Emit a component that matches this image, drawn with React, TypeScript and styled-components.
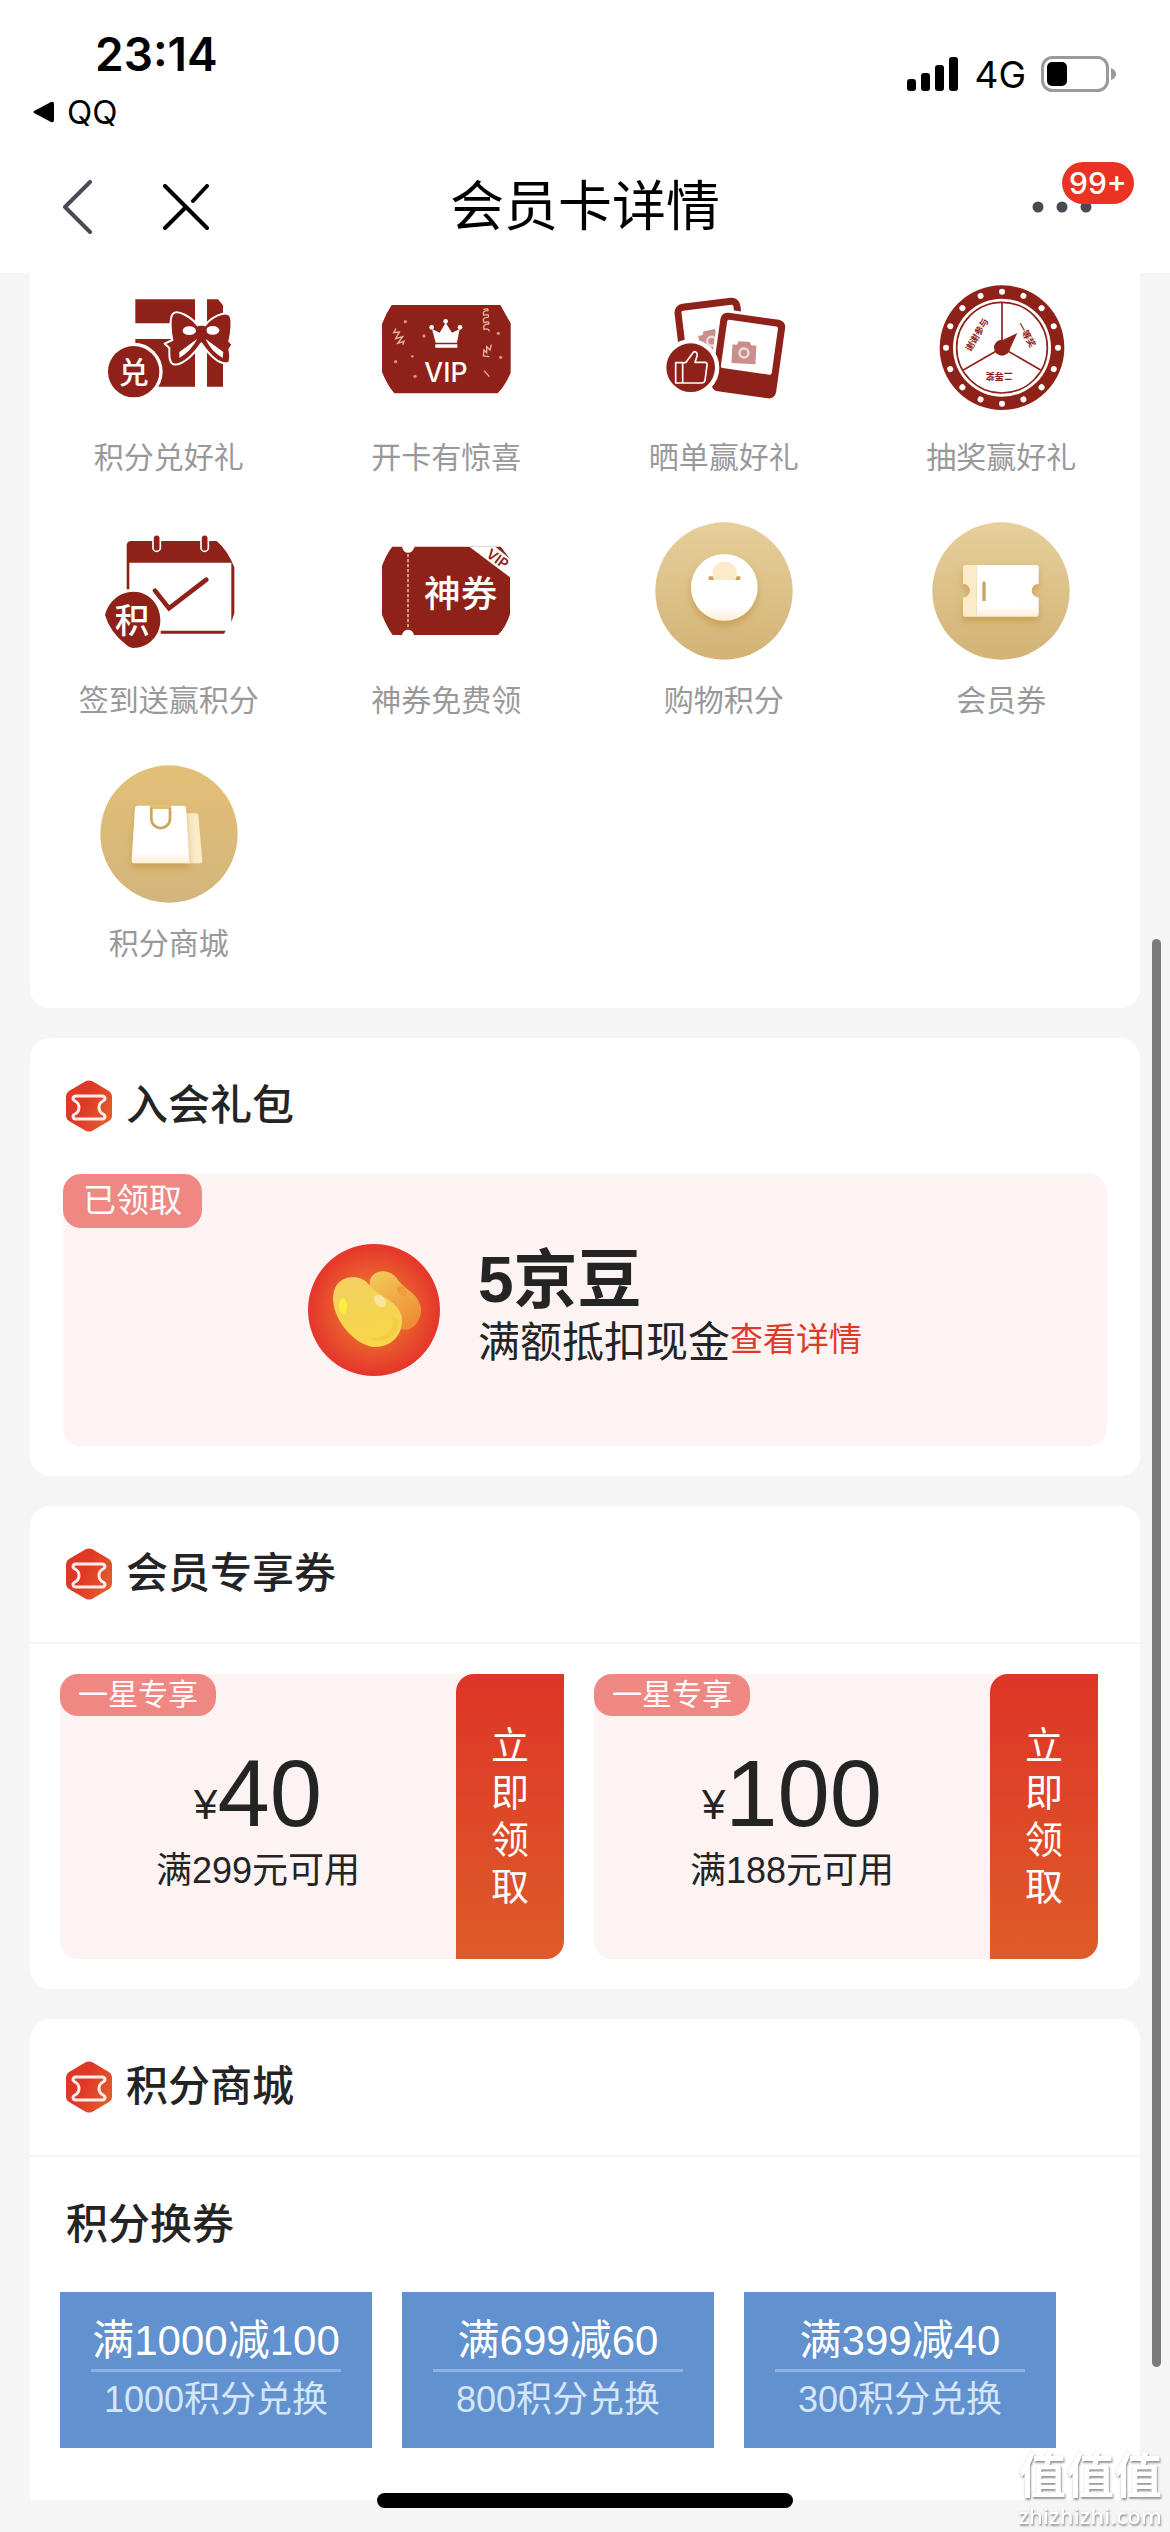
import React from "react";
import styled, { createGlobalStyle } from "styled-components";

const RED = "#8e2118";
const CJK = '"Noto Sans CJK SC", sans-serif';

const GlobalStyle = createGlobalStyle`
  *, *::before, *::after { box-sizing: border-box; }
  body {
    margin: 0;
    background: #f5f5f5;
    color: #242424;
    font-family: "Liberation Sans", ${CJK};
  }
  button {
    margin: 0;
    padding: 0;
    border: 0;
    background: none;
    color: inherit;
    font-family: inherit;
    cursor: pointer;
  }
  a { color: inherit; text-decoration: none; }
  h1, h2, h3, p { margin: 0; }
  svg { display: block; flex: none; }
`;

/* ---------- top of the phone ---------- */

const TopArea = styled.header`
  background: #fff;
  color: #000;
`;

const StatusBar = styled.div`
  display: flex;
  justify-content: space-between;
  height: 140px;
  padding: 24px 54px 0 33px;
  font-family: Inter, ${CJK};
`;

const Clock = styled.div`
  padding-left: 62px;
  font-size: 46px;
  font-weight: 600;
  line-height: 60px;
`;

const BackToApp = styled.a`
  display: flex;
  align-items: center;
  gap: 13px;
  font-size: 33px;
  line-height: 56px;
`;

const Signals = styled.div`
  display: flex;
  align-items: center;
  gap: 15px;
  height: 100px;
  font-size: 37px;
`;

const NavBar = styled.nav`
  display: grid;
  grid-template-columns: 1fr auto 1fr;
  align-items: center;
  height: 133px;
  padding: 0 36px;
`;

const NavActions = styled.div`
  display: flex;
  align-items: center;
  gap: 70px;
  padding-left: 26px;
`;

const PageTitle = styled.h1`
  font-size: 54px;
  font-weight: 400;
  line-height: 80px;
`;

const MenuButton = styled.button`
  position: relative;
  justify-self: end;
  padding: 20px 42px 20px 0;
`;

const Badge = styled.span`
  position: absolute;
  top: -19px;
  right: 0;
  width: 72px;
  border-radius: 21px;
  background: #ea3323;
  color: #fff;
  font: 500 30px/42px Inter, ${CJK};
  text-align: center;
`;

/* ---------- cards ---------- */

const Content = styled.main`
  display: flex;
  flex-direction: column;
  gap: 30px;
  padding: 0 30px 32px;
`;

const Card = styled.section<{ $continues?: boolean }>`
  border-radius: ${(p) => (p.$continues ? "20px 20px 0 0" : "20px")};
  background: #fff;
`;

const ServiceGrid = styled.section`
  display: grid;
  grid-template-columns: repeat(4, 1fr);
  row-gap: 43px;
  padding: 6px 0 43px;
  border-radius: 0 0 20px 20px;
  background: #fff;
`;

const Service = styled.button`
  display: flex;
  flex-direction: column;
  align-items: center;
  gap: 20px;
  color: #999;
  font-size: 30px;
  line-height: 42px;
`;

const CardHeader = styled.div<{ $divided?: boolean }>`
  display: flex;
  align-items: center;
  gap: 14px;
  height: ${(p) => (p.$divided ? 138 : 136)}px;
  padding: 0 36px;
  border-bottom: ${(p) => (p.$divided ? "2px solid #f5f5f5" : "0")};
`;

const CardTitle = styled.h2`
  font-size: 42px;
  font-weight: 500;
  line-height: 60px;
`;

const SubTitle = styled.h3`
  padding: 0 36px;
  font-size: 42px;
  font-weight: 500;
  line-height: 135px;
`;

const Tag = styled.span<{ $small?: boolean }>`
  position: absolute;
  top: 0;
  left: 0;
  padding: 0 ${(p) => (p.$small ? 18 : 20)}px;
  border-radius: 18px;
  background: #ef8883;
  color: #fff;
  font-size: ${(p) => (p.$small ? 30 : 33)}px;
  line-height: ${(p) => (p.$small ? 42 : 54)}px;
`;

const GiftPanel = styled.div`
  position: relative;
  display: flex;
  align-items: center;
  justify-content: center;
  gap: 38px;
  height: 272px;
  border-radius: 18px;
  background: #fdf3f2;
`;

const GiftBody = styled.div`
  padding: 0 33px 30px;
`;

const GiftName = styled.p`
  font-size: 64px;
  font-weight: 700;
  line-height: 66px;
`;

const GiftNote = styled.p`
  display: flex;
  align-items: flex-start;
  font-size: 42px;
  line-height: 60px;
`;

const DetailLink = styled.a`
  color: #dd3a27;
  font-size: 33px;
  line-height: 54px;
`;

const CouponRow = styled.div`
  display: grid;
  grid-template-columns: 1fr 1fr;
  gap: 30px;
  padding: 30px 42px 30px 30px;
`;

const Coupon = styled.article`
  position: relative;
  display: flex;
  height: 285px;
  border-radius: 18px;
  background: #fdf3f2;
`;

const CouponInfo = styled.div`
  display: flex;
  flex: 1;
  flex-direction: column;
  align-items: center;
  justify-content: center;
  padding-top: 15px;
`;

const Amount = styled.p`
  display: flex;
  align-items: flex-end;
  font-size: 94px;
  line-height: 94px;
`;

const Currency = styled.span`
  font-size: 42px;
  line-height: 72px;
`;

const Condition = styled.p`
  font-size: 36px;
  line-height: 60px;
`;

const ClaimButton = styled.button`
  display: flex;
  align-items: center;
  justify-content: center;
  width: 108px;
  border-radius: 18px 0 18px 0;
  background: linear-gradient(#dd3526, #df5b29);
  color: #fff;
  font-size: 38px;
  line-height: 47px;
`;

const ClaimText = styled.span`
  width: 38px;
`;

const ExchangeRow = styled.div`
  display: grid;
  grid-template-columns: repeat(3, 1fr);
  gap: 30px;
  padding: 0 84px 52px 30px;
`;

const Exchange = styled.button`
  height: 156px;
  padding: 0 31px;
  background: #6191cf;
  color: #fff;
  text-align: center;
  white-space: nowrap;
`;

const ExchangeOffer = styled.span`
  display: block;
  border-bottom: 3px solid #8fb2e2;
  font-size: 42px;
  line-height: 56px;
`;

const ExchangeCost = styled.span`
  display: block;
  color: #d6e6fa;
  font-size: 36px;
  line-height: 56px;
`;

/* ---------- overlays ---------- */

const ScrollThumb = styled.div`
  position: absolute;
  top: 939px;
  right: 9px;
  width: 9px;
  height: 1428px;
  border-radius: 5px;
  background: #7b7b7b;
`;

const HomeBar = styled.div`
  position: fixed;
  bottom: 24px;
  left: 50%;
  width: 416px;
  height: 15px;
  margin-left: -208px;
  border-radius: 8px;
  background: #000;
`;

const Watermark = styled.div`
  position: fixed;
  right: 8px;
  bottom: 2px;
  display: flex;
  flex-direction: column;
  align-items: center;
  color: #fff;
  font-family: "Open Sans", ${CJK};
  text-shadow: 1px 2px 2px #999, 0 0 1px #bbb;
`;

const WatermarkName = styled.span`
  font-size: 48px;
  font-weight: 700;
  line-height: 50px;
`;

const WatermarkSite = styled.span`
  font-size: 22px;
  font-weight: 600;
  line-height: 30px;
`;

/* ---------- drawings ---------- */

function Art({ box, children }: { box: string; children: React.ReactNode }) {
  return (
    <svg width="138" height="138" viewBox={box} fill={RED} fontFamily={CJK} aria-hidden="true">
      {children}
    </svg>
  );
}

const GiftArt = () => (
  <Art box="14 -3 414 414">
    <path d="M120 58H299V130H120zM120 177H299V320H120zM335 58H368L383 76V320H335z" />
    <path
      d="M308 138C290 112 246 86 232 102C222 116 226 156 231 180L208 191L222 204C222 224 220 246 234 253C262 258 296 222 318 190C340 222 372 256 400 249C408 238 404 220 402 208L411 194L402 184C408 160 412 118 404 106C390 90 346 112 328 138z"
      stroke="#fff"
      strokeWidth="6"
      strokeLinejoin="round"
    />
    <ellipse cx="282" cy="152" rx="20" ry="13" fill="#fff" />
    <ellipse cx="352" cy="151" rx="20" ry="13" fill="#fff" />
    <path d="M306 176L252 216L252 234Q288 212 306 176zM330 176L384 216L382 234Q346 212 330 176z" fill="#fff" />
    <rect x="302" y="137" width="32" height="44" rx="12" />
    <circle cx="115" cy="275" r="87" fill="#fff" />
    <circle cx="115" cy="275" r="77" />
    <text x="115" y="309" fontSize="90" fontWeight="500" textAnchor="middle" fill="#fff">兑</text>
  </Art>
);

const VipArt = () => (
  <Art box="847 -3 414 414">
    <path d="M891 75H1217Q1231 100 1248 130V278Q1232 316 1209 340H899Q878 316 862 276V132Q874 100 891 75z" />
    <g fill="#fff">
      <path d="M1023 188L1012 147L1035 158L1053 128L1072 158L1095 147L1087 188zM1022 193H1088V203H1022z" />
      <circle cx="1011" cy="142" r="7" />
      <circle cx="1053" cy="124" r="7" />
      <circle cx="1096" cy="142" r="7" />
      <text x="1054" y="305" fontSize="80" fontWeight="500" fontFamily="Inter, sans-serif" textAnchor="middle">VIP</text>
    </g>
    <g fill="none" stroke="#e9b5ad" strokeWidth="4">
      <path d="M904 146L897 158L914 156L903 176L924 170L909 190L928 184L924 194" />
      <path d="M1166 88Q1182 84 1180 92Q1160 92 1168 106Q1186 100 1180 112Q1160 112 1168 128Q1186 122 1182 132Q1162 132 1168 148Q1182 144 1184 154" />
      <path d="M1190 194L1186 210L1176 200V218L1168 210L1166 228L1184 230M1168 272L1184 290" />
    </g>
    <g fill="#e08d83">
      <circle cx="932" cy="125" r="5" /><circle cx="988" cy="168" r="5" /><circle cx="903" cy="245" r="5" />
      <circle cx="953" cy="229" r="4" /><circle cx="961" cy="289" r="5" /><circle cx="1211" cy="160" r="5" />
      <circle cx="1218" cy="232" r="5" />
    </g>
  </Art>
);

const Camera = () => (
  <g fill="#c98f8d">
    <path d="M-36 -24H-22L-18 -34H16L20 -24H36V32H-36z" />
    <circle r="17" fill="#f1dcdb" />
    <circle r="10" />
  </g>
);

const PhotoArt = () => (
  <Art box="14 12 414 414">
    <g transform="rotate(-7 170 150)">
      <rect x="88" y="88" width="178" height="200" rx="16" fill="#fff" stroke={RED} strokeWidth="21" />
      <g transform="translate(178 200) rotate(-6)"><Camera /></g>
    </g>
    <g transform="rotate(8 290 240)">
      <rect x="187" y="113" width="214" height="260" rx="26" fill="#fff" />
      <rect x="196" y="122" width="196" height="238" rx="22" />
      <rect x="217" y="143" width="154" height="146" rx="6" fill="#fff" />
    </g>
    <g transform="translate(281 234) rotate(3)"><Camera /></g>
    <circle cx="121" cy="278" r="86" fill="#fff" />
    <circle cx="121" cy="278" r="73" />
    <path
      d="M76 263H106L128 233Q132 228 138 232Q143 237 138 250L134 262H164Q171 262 170 271L164 316Q162 324 154 324H76zM97 264V323"
      fill="none"
      stroke="#fff"
      strokeWidth="5"
      strokeLinejoin="round"
    />
  </Art>
);

const WheelArt = () => (
  <Art box="847 12 414 414">
    <circle cx="1057" cy="218" r="187" />
    <circle cx="1057" cy="218" r="147" fill="#fff" />
    <circle cx="1057" cy="218" r="136" fill="none" stroke={RED} strokeWidth="5" />
    <path d="M1057 218V84M1057 218L941 285M1057 218L1173 285" stroke={RED} strokeWidth="5" />
    {Array.from({ length: 16 }, (_, i) => (
      <circle key={i} cx="1057" cy="50" r="9" fill="#fff" transform={"rotate(" + i * 22.5 + " 1057 218)"} />
    ))}
    <circle cx="1057" cy="218" r="24" />
    <path d="M1042 203L1103 174L1076 232z" />
    <g fontSize="27" fontWeight="700" textAnchor="middle">
      <text transform="translate(1122 184) rotate(60)">一等奖</text>
      <text transform="translate(1049 295) rotate(180)">二等奖</text>
      <text transform="translate(990 184) rotate(-60)">谢谢参与</text>
    </g>
  </Art>
);

const CheckInArt = () => (
  <Art box="14 726 414 414">
    <path d="M94 928V796Q95 783 108 783H364Q398 812 417 862V1000L408 1026V848H102V928z" />
    <path d="M196 1052H391L386 1061H196z" />
    <rect x="173" y="764" width="22" height="50" rx="11" stroke="#fff" strokeWidth="5" />
    <rect x="317" y="764" width="22" height="50" rx="11" stroke="#fff" strokeWidth="5" />
    <path d="M179 932L221 985L333 899" fill="none" stroke={RED} strokeWidth="14" strokeLinecap="round" />
    <path d="M115 935C160 935 195 973 195 1020C195 1067 160 1104 113 1104Q100 1103 90 1092Q44 1056 29 1005C38 970 68 935 115 935z" />
    <text x="110" y="1058" fontSize="104" fontWeight="500" textAnchor="middle" fill="#fff">积</text>
  </Art>
);

const CouponArt = () => (
  <Art box="847 726 414 414">
    <path d="M893 800H922Q926 818 940 818Q954 818 960 800H1218L1246 836V1002Q1234 1042 1210 1065H958Q954 1049 940 1049Q926 1049 922 1065H894Q876 1040 862 1004V858Q874 824 893 800z" />
    <path d="M940 822V1046" stroke="#f0c9c4" strokeWidth="4" strokeDasharray="10 5" />
    <path d="M1124 800H1202L1248 838V893z" fill="#fff" />
    <text transform="translate(1172 828) rotate(36)" fontSize="42" fontWeight="600" fontFamily="Inter, sans-serif">VIP</text>
    <text x="1098" y="982" fontSize="110" fontWeight="500" textAnchor="middle" fill="#fff">神券</text>
  </Art>
);

const Gold = ({ id, from, to }: { id: string; from: string; to: string }) => (
  <>
    <defs>
      <linearGradient id={id} x2="0" y2="1">
        <stop stopColor={from} />
        <stop offset="1" stopColor={to} />
      </linearGradient>
      <linearGradient id={id + "-paper"} x2="0" y2="1">
        <stop offset="0.8" stopColor="#fff" />
        <stop offset="1" stopColor="#fbeed6" />
      </linearGradient>
      <filter id={id + "-shade"} x="-30%" y="-30%" width="160%" height="170%">
        <feDropShadow dx="0" dy="14" stdDeviation="11" floodColor="#bd8a2e" floodOpacity="0.55" />
      </filter>
    </defs>
    <circle cx="207" cy="207" r="206" fill={"url(#" + id + ")"} />
  </>
);

const PointsArt = () => (
  <Art box="0 0 414 414">
    <Gold id="points" from="#e6cf9b" to="#d3b376" />
    <circle cx="208" cy="196" r="100" fill="url(#points-paper)" filter="url(#points-shade)" />
    <path d="M161 163H256V174H161z" fill="#cba45c" />
    <path d="M177 174A37 37 0 1 1 241 174z" fill="#fcebc8" />
  </Art>
);

const TicketArt = () => (
  <Art box="0 0 414 414">
    <Gold id="ticket" from="#e6cf9b" to="#d3b376" />
    <g filter="url(#ticket-shade)">
      <path d="M134 129H312Q320 129 320 137V185A21 21 0 0 0 320 227V276Q320 284 312 284H134z" fill="url(#ticket-paper)" />
      <path d="M134 129H100Q93 129 93 137V185A21 21 0 0 1 93 227V276Q93 284 100 284H134z" fill="#fcebc8" />
    </g>
    <path d="M151 179H161V237H151z" fill="#cba55e" />
  </Art>
);

const BagArt = () => (
  <Art box="0 0 414 414">
    <Gold id="bag" from="#e3c077" to="#d3b57c" />
    <path d="M250 145H287Q294 145 295 152L307 287Q307 295 299 295H250z" fill="#faebc9" />
    <path
      d="M113 122H250Q258 122 258 130L268 295H102Q94 295 95 286L105 130Q106 122 113 122z"
      fill="url(#bag-paper)"
      filter="url(#bag-shade)"
    />
    <path d="M149 121H214V132H149z" fill="#dfbd77" />
    <path d="M154 130V161A28 28 0 0 0 210 161V130" fill="none" stroke="#cda45a" strokeWidth="8" />
  </Art>
);

const TicketBadge = () => (
  <svg width="46" height="52" viewBox="0 0 46 52" aria-hidden="true">
    <defs>
      <linearGradient id="hex" x1="0" y1="0" x2="1" y2="0.5">
        <stop offset="0.5" stopColor="#e03827" />
        <stop offset="1" stopColor="#e05a2b" />
      </linearGradient>
    </defs>
    <path d="M20 1Q23 0 26 1L43 11Q46 13 46 16V36Q46 39 43 41L26 51Q23 52 20 51L3 41Q0 39 0 36V16Q0 13 3 11z" fill="url(#hex)" />
    <path
      d="M10 16H36Q39 16 39 19Q39 20 37 21Q33 23 33 27.5Q33 32 37 34Q39 35 39 36Q39 39 36 39H10Q7 39 7 36Q7 35 9 34Q13 32 13 27.5Q13 23 9 21Q7 20 7 19Q7 16 10 16z"
      fill="none"
      stroke="#ffeceb"
      strokeWidth="3"
    />
  </svg>
);

const BeanArt = () => (
  <svg width="132" height="132" viewBox="0 0 132 132" aria-hidden="true">
    <defs>
      <radialGradient id="coin">
        <stop offset="0.2" stopColor="#ed7d30" />
        <stop offset="1" stopColor="#e5352b" />
      </radialGradient>
      <linearGradient id="bean" x2="0.3" y2="1">
        <stop stopColor="#f2cf63" />
        <stop offset="1" stopColor="#f8d648" />
      </linearGradient>
      <linearGradient id="bean-back" x2="0.5" y2="1">
        <stop stopColor="#f4cd5b" />
        <stop offset="1" stopColor="#ee8f35" />
      </linearGradient>
    </defs>
    <circle cx="66" cy="66" r="66" fill="url(#coin)" />
    <path d="M62 36C66 25 82 24 90 36C96 45 108 48 112 60C116 72 108 84 98 86C84 87 58 56 62 36z" fill="url(#bean-back)" />
    <path d="M28 42C36 30 54 30 62 42C70 52 88 56 93 70C98 88 84 104 66 103C44 101 16 66 28 42z" fill="url(#bean)" />
    <path d="M84 72C88 86 76 96 62 94C74 100 92 94 90 76z" fill="#f4c63f" opacity="0.6" />
    <ellipse cx="35" cy="62" rx="4" ry="8" fill="#fbee3f" />
    <ellipse cx="72" cy="57" rx="5" ry="7" fill="#f9e4a0" transform="rotate(-45 72 57)" />
    <ellipse cx="94" cy="47" rx="4" ry="6" fill="#ee9c3c" transform="rotate(-45 94 47)" />
  </svg>
);

/* ---------- data ---------- */

const services = [
  { label: "积分兑好礼", Icon: GiftArt },
  { label: "开卡有惊喜", Icon: VipArt },
  { label: "晒单赢好礼", Icon: PhotoArt },
  { label: "抽奖赢好礼", Icon: WheelArt },
  { label: "签到送赢积分", Icon: CheckInArt },
  { label: "神券免费领", Icon: CouponArt },
  { label: "购物积分", Icon: PointsArt },
  { label: "会员券", Icon: TicketArt },
  { label: "积分商城", Icon: BagArt },
];

const coupons = [
  { amount: 40, minimum: 299 },
  { amount: 100, minimum: 188 },
];

const exchanges = [
  { offer: "满1000减100", cost: 1000 },
  { offer: "满699减60", cost: 800 },
  { offer: "满399减40", cost: 300 },
];

export default function App() {
  return (
    <>
      <GlobalStyle />
      <TopArea>
        <StatusBar>
          <div>
            <Clock>23:14</Clock>
            <BackToApp href="#qq">
              <svg width="21" height="22" viewBox="0 0 21 22" aria-hidden="true">
                <path d="M1 10Q0 11 1 12L18 21Q21 22 21 19V3Q21 0 18 1z" />
              </svg>
              QQ
            </BackToApp>
          </div>
          <Signals>
            <svg width="52" height="34" viewBox="0 0 52 34" aria-hidden="true">
              <rect y="22" width="9" height="12" rx="3" />
              <rect x="14" y="16" width="9" height="18" rx="3" />
              <rect x="28" y="8" width="9" height="26" rx="3" />
              <rect x="42" width="9" height="34" rx="3" />
            </svg>
            4G
            <svg width="75" height="36" viewBox="0 0 75 36" aria-hidden="true">
              <rect x="1.5" y="1.5" width="65" height="33" rx="10" fill="none" stroke="#9a9a9a" strokeWidth="3" />
              <path d="M70 12Q75 14 75 18Q75 22 70 24z" fill="#9a9a9a" />
              <rect x="6" y="6" width="20" height="24" rx="5" />
            </svg>
          </Signals>
        </StatusBar>
        <NavBar>
          <NavActions>
            <button aria-label="返回">
              <svg width="31" height="54" viewBox="0 0 31 54" fill="none" stroke="#4a4a54" strokeWidth="4" strokeLinecap="round" strokeLinejoin="round">
                <path d="M28 2L3 27L28 52" />
              </svg>
            </button>
            <button aria-label="关闭">
              <svg width="46" height="46" viewBox="0 0 46 46" fill="none" stroke="#000" strokeWidth="4" strokeLinecap="round">
                <path d="M2 2L44 44M2 44L23 23M44 2L30 17" />
              </svg>
            </button>
          </NavActions>
          <PageTitle>会员卡详情</PageTitle>
          <MenuButton aria-label="更多">
            <svg width="60" height="12" viewBox="0 0 60 12" fill="#4a4a54">
              <circle cx="6" cy="6" r="5.5" />
              <circle cx="30" cy="6" r="5.5" />
              <circle cx="54" cy="6" r="5.5" />
            </svg>
            <Badge>99+</Badge>
          </MenuButton>
        </NavBar>
      </TopArea>

      <Content>
        <ServiceGrid>
          {services.map(({ label, Icon }) => (
            <Service key={label}>
              <Icon />
              <span>{label}</span>
            </Service>
          ))}
        </ServiceGrid>

        <Card>
          <CardHeader>
            <TicketBadge />
            <CardTitle>入会礼包</CardTitle>
          </CardHeader>
          <GiftBody>
            <GiftPanel>
              <Tag>已领取</Tag>
              <BeanArt />
              <div>
                <GiftName>5京豆</GiftName>
                <GiftNote>
                  满额抵扣现金<DetailLink href="#detail">查看详情</DetailLink>
                </GiftNote>
              </div>
            </GiftPanel>
          </GiftBody>
        </Card>

        <Card>
          <CardHeader $divided>
            <TicketBadge />
            <CardTitle>会员专享券</CardTitle>
          </CardHeader>
          <CouponRow>
            {coupons.map(({ amount, minimum }) => (
              <Coupon key={amount}>
                <Tag $small>一星专享</Tag>
                <CouponInfo>
                  <Amount>
                    <Currency>¥</Currency>
                    {amount}
                  </Amount>
                  <Condition>满{minimum}元可用</Condition>
                </CouponInfo>
                <ClaimButton>
                  <ClaimText>立即领取</ClaimText>
                </ClaimButton>
              </Coupon>
            ))}
          </CouponRow>
        </Card>

        <Card $continues>
          <CardHeader $divided>
            <TicketBadge />
            <CardTitle>积分商城</CardTitle>
          </CardHeader>
          <SubTitle>积分换券</SubTitle>
          <ExchangeRow>
            {exchanges.map(({ offer, cost }) => (
              <Exchange key={cost}>
                <ExchangeOffer>{offer}</ExchangeOffer>
                <ExchangeCost>{cost}积分兑换</ExchangeCost>
              </Exchange>
            ))}
          </ExchangeRow>
        </Card>
      </Content>

      <ScrollThumb />
      <HomeBar />
      <Watermark>
        <WatermarkName>值值值</WatermarkName>
        <WatermarkSite>zhizhizhi.com</WatermarkSite>
      </Watermark>
    </>
  );
}
